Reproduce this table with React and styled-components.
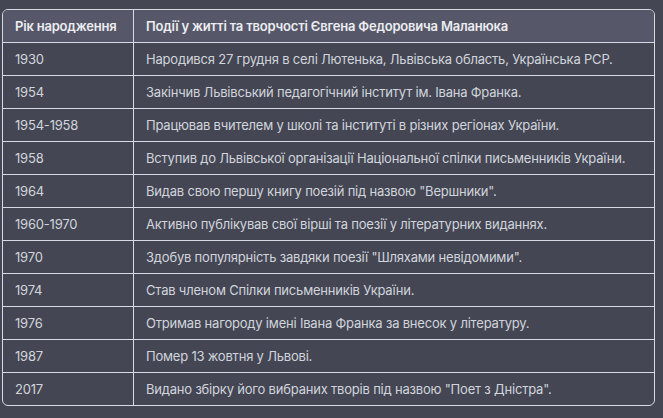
import React from "react";
import styled, { createGlobalStyle } from "styled-components";

const GlobalStyle = createGlobalStyle`
  html, body {
    margin: 0;
    background: #444654;
  }
  body {
    font-family: Inter, "Noto Sans", sans-serif;
  }
`;

const Page = styled.div`
  padding: 9px 0 0 2px;
  width: 653px;
`;

const Table = styled.table`
  width: 100%;
  table-layout: fixed;
  border-collapse: separate;
  border-spacing: 0;
  font-size: 13px;
  line-height: 20px;
  letter-spacing: -0.2px;
  color: #d1d5db;
  border: 1px solid #d9d9e3;
  border-radius: 6px;
  overflow: hidden;
`;

const HeadCell = styled.th`
  background: #565869;
  color: #ececf1;
  font-weight: 600;
  text-align: left;
  padding: 6px 12px;
  height: 20px;
  white-space: nowrap;
  border-left: ${p => (p.first ? "none" : "1px solid #d9d9e3")};
  width: ${p => (p.first ? "106px" : "auto")};
`;

const Cell = styled.td`
  padding: 6px 12px;
  height: 20px;
  border-top: 1px solid #d9d9e3;
  border-left: ${p => (p.first ? "none" : "1px solid #d9d9e3")};
  white-space: nowrap;
`;

const rows = [
  ["1930", "Народився 27 грудня в селі Лютенька, Львівська область, Українська РСР."],
  ["1954", "Закінчив Львівський педагогічний інститут ім. Івана Франка."],
  ["1954-1958", "Працював вчителем у школі та інституті в різних регіонах України."],
  ["1958", "Вступив до Львівської організації Національної спілки письменників України."],
  ["1964", "Видав свою першу книгу поезій під назвою \"Вершники\"."],
  ["1960-1970", "Активно публікував свої вірші та поезії у літературних виданнях."],
  ["1970", "Здобув популярність завдяки поезії \"Шляхами невідомими\"."],
  ["1974", "Став членом Спілки письменників України."],
  ["1976", "Отримав нагороду імені Івана Франка за внесок у літературу."],
  ["1987", "Помер 13 жовтня у Львові."],
  ["2017", "Видано збірку його вибраних творів під назвою \"Поет з Дністра\"."],
];

export default function App() {
  return (
    <Page>
      <GlobalStyle />
      <Table>
        <thead>
          <tr>
            <HeadCell first>Рік народження</HeadCell>
            <HeadCell>Події у житті та творчості Євгена Федоровича Маланюка</HeadCell>
          </tr>
        </thead>
        <tbody>
          {rows.map(([year, text]) => (
            <tr key={year}>
              <Cell first>{year}</Cell>
              <Cell>{text}</Cell>
            </tr>
          ))}
        </tbody>
      </Table>
    </Page>
  );
}
